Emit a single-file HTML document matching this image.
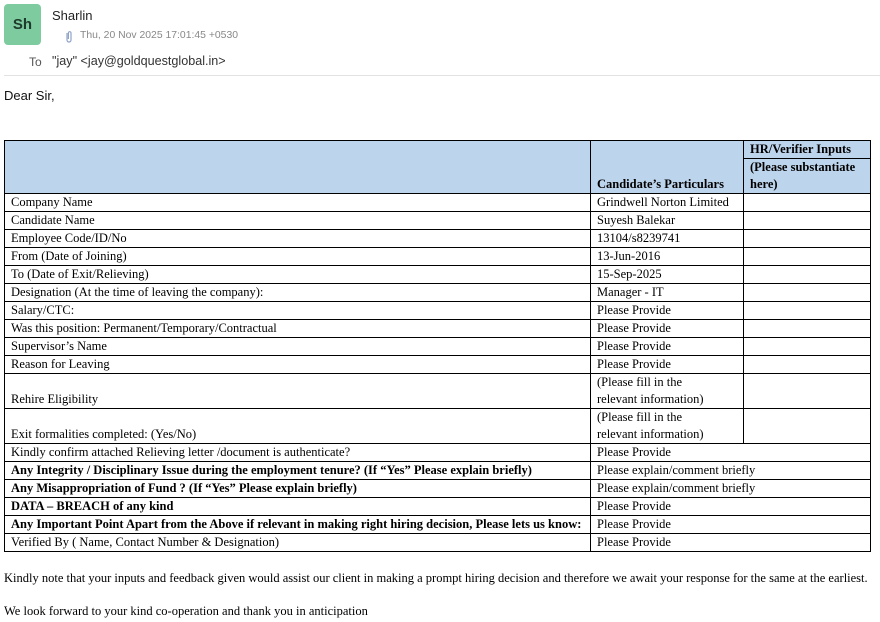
<!DOCTYPE html>
<html><head><meta charset="utf-8"><style>
body{margin:0;width:880px;height:622px;background:#fff;position:relative;overflow:hidden;font-family:"Liberation Sans",sans-serif;color:#222}
.a{position:absolute}
.av{left:4px;top:4px;width:37px;height:41px;background:#7ecba0;border-radius:4px;font-size:15px;font-weight:bold;color:#1d3a2a;display:flex;align-items:center;justify-content:center}
table{position:absolute;left:4px;top:140px;width:866px;border-collapse:collapse;font-family:"Liberation Serif",serif;font-size:12.5px;color:#000;table-layout:fixed}
td{border:1px solid #000;padding:0 0 0 6px;height:17px;line-height:17px;vertical-align:bottom;white-space:nowrap;overflow:hidden}
th{border:1px solid #000;background:#bdd5ec;text-align:left;padding:0 0 0 6px;font-size:12.5px;line-height:17px;vertical-align:bottom}
td.t{height:34px}
.w{vertical-align:top}
.b{font-weight:bold}
.f{font-family:"Liberation Serif",serif;font-size:12.5px;color:#000;white-space:nowrap}
</style></head><body>
<div class="a av">Sh</div>
<div class="a" style="left:52px;top:8px;font-size:13px;color:#222">Sharlin</div>
<svg class="a" style="left:64px;top:30px" width="10" height="14" viewBox="0 0 10 14"><path d="M3 3v7a2 2 0 0 0 4 0V3a1.3 1.3 0 0 0-2.6 0v6" fill="none" stroke="#8fa3c8" stroke-width="1.2"/></svg>
<div class="a" style="left:80px;top:30px;font-size:10.4px;color:#888">Thu, 20 Nov 2025 17:01:45 +0530</div>
<div class="a" style="left:29px;top:55px;font-size:12px;color:#555">To</div>
<div class="a" style="left:52px;top:54px;font-size:12.6px;color:#333">"jay" &lt;jay@goldquestglobal.in&gt;</div>
<div class="a" style="left:4px;top:75px;width:876px;height:1px;background:#e2e2e2"></div>
<div class="a" style="left:4px;top:88px;font-size:13px;color:#111">Dear Sir,</div>
<table>
<colgroup><col style="width:586px"><col style="width:153px"><col style="width:127px"></colgroup>
<tr><th rowspan="2" style="height:51px"></th><th rowspan="2" style="vertical-align:bottom">Candidate’s Particulars</th><th style="height:17px">HR/Verifier Inputs</th></tr>
<tr><th style="height:33px;vertical-align:top;white-space:normal">(Please substantiate here)</th></tr>
<tr><td>Company Name</td><td>Grindwell Norton Limited</td><td></td></tr>
<tr><td>Candidate Name</td><td>Suyesh Balekar</td><td></td></tr>
<tr><td>Employee Code/ID/No</td><td>13104/s8239741</td><td></td></tr>
<tr><td>From (Date of Joining)</td><td>13-Jun-2016</td><td></td></tr>
<tr><td>To (Date of Exit/Relieving)</td><td>15-Sep-2025</td><td></td></tr>
<tr><td>Designation (At the time of leaving the company):</td><td>Manager - IT</td><td></td></tr>
<tr><td>Salary/CTC:</td><td>Please Provide</td><td></td></tr>
<tr><td>Was this position: Permanent/Temporary/Contractual</td><td>Please Provide</td><td></td></tr>
<tr><td>Supervisor’s Name</td><td>Please Provide</td><td></td></tr>
<tr><td>Reason for Leaving</td><td>Please Provide</td><td></td></tr>
<tr><td class="t">Rehire Eligibility</td><td class="t w">(Please fill in the<br>relevant information)</td><td class="t"></td></tr>
<tr><td class="t">Exit formalities completed: (Yes/No)</td><td class="t w">(Please fill in the<br>relevant information)</td><td class="t"></td></tr>
<tr><td>Kindly confirm attached Relieving letter /document is authenticate?</td><td colspan="2">Please Provide</td></tr>
<tr><td class="b">Any Integrity / Disciplinary Issue during the employment tenure? (If “Yes” Please explain briefly)</td><td colspan="2">Please explain/comment briefly</td></tr>
<tr><td class="b">Any Misappropriation of Fund ? (If “Yes” Please explain briefly)</td><td colspan="2">Please explain/comment briefly</td></tr>
<tr><td class="b">DATA – BREACH of any kind</td><td colspan="2">Please Provide</td></tr>
<tr><td class="b">Any Important Point Apart from the Above if relevant in making right hiring decision, Please lets us know:</td><td colspan="2">Please Provide</td></tr>
<tr><td>Verified By ( Name, Contact Number &amp; Designation)</td><td colspan="2">Please Provide</td></tr>
</table>
<div class="a f" style="left:4px;top:571px">Kindly note that your inputs and feedback given would assist our client in making a prompt hiring decision and therefore we await your response for the same at the earliest.</div>
<div class="a f" style="left:4px;top:604px">We look forward to your kind co-operation and thank you in anticipation</div>
</body></html>
